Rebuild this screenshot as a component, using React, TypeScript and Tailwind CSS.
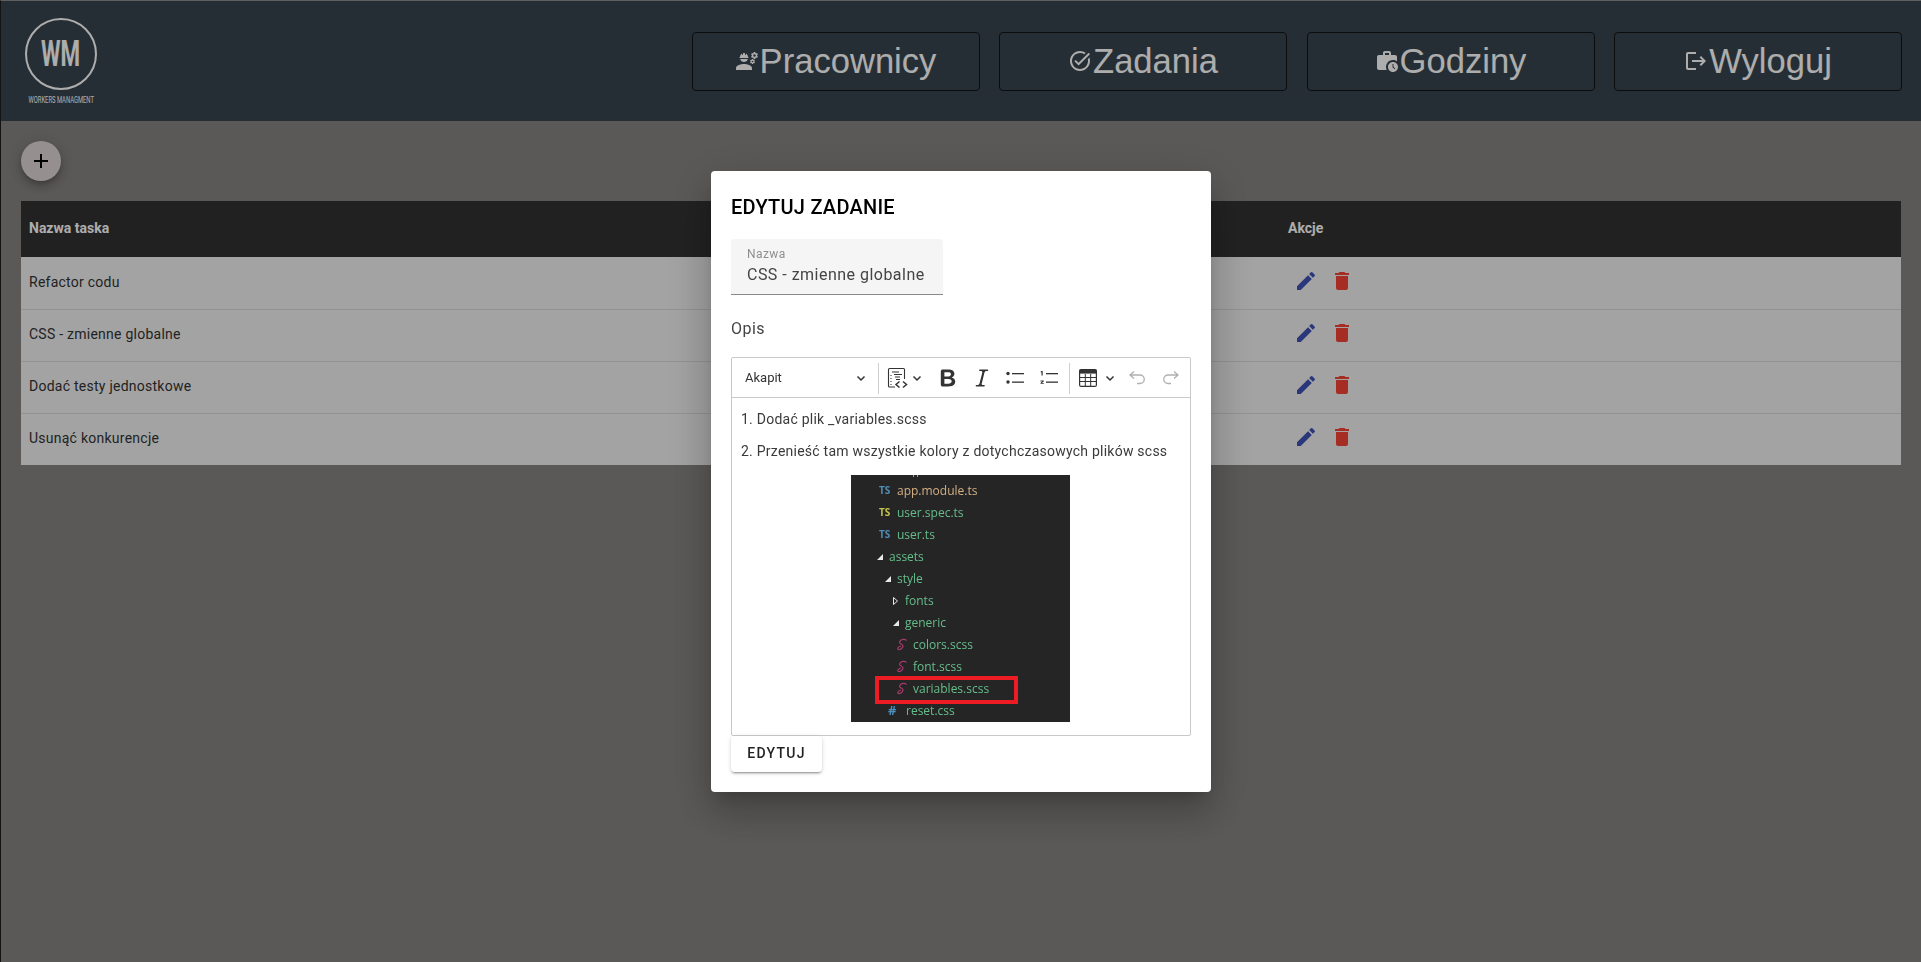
import { MdAdd, MdDelete, MdEdit, MdEngineering, MdLogout, MdTaskAlt, MdWorkHistory } from "react-icons/md";
import type { ReactNode } from "react";

const navItems = [
  { label: "Pracownicy", icon: <MdEngineering size={24} /> },
  { label: "Zadania", icon: <MdTaskAlt size={24} /> },
  { label: "Godziny", icon: <MdWorkHistory size={24} /> },
  { label: "Wyloguj", icon: <MdLogout size={24} /> },
];

const tasks = ["Refactor codu", "CSS - zmienne globalne", "Dodać testy jednostkowe", "Usunąć konkurencje"];

function Chevron() {
  return (
    <svg width="10" height="10" viewBox="0 0 10 10" fill="none" stroke="#333" strokeWidth="1.5" className="shrink-0">
      <path d="M1.5 3.5 5 7l3.5-3.5" />
    </svg>
  );
}

function ToolIcon({ children, className }: { children: ReactNode; className: string }) {
  return <div className={`flex items-center justify-center h-full shrink-0 ${className}`}>{children}</div>;
}

function SassIcon() {
  return (
    <svg width="12" height="14" viewBox="0 0 12 14" fill="none" stroke="#a63a6c" strokeWidth="1.2">
      <path d="M10.500 2.500C9 .5 4.500 1 3.500 4c-.6 2 3.500 2 3.500 4 0 2-3 4-4.500 3.500-1.500-.5-.5-3 2.500-3.500" />
    </svg>
  );
}

function Arrow({ open }: { open?: boolean }) {
  return open ? (
    <svg width="6" height="6" viewBox="0 0 6 6" className="shrink-0">
      <path d="M6 0v6H0z" fill="#e8e8e8" />
    </svg>
  ) : (
    <svg width="5" height="8" viewBox="0 0 5 8" className="shrink-0">
      <path d="M.5.5 4.500 4 .5 7.500z" fill="#252526" stroke="#e8e8e8" />
    </svg>
  );
}

function TreeRow({ indent, iconBox, icon, label, color = "text-[#66bd8a]" }: { indent: string; iconBox: string; icon: ReactNode; label: string; color?: string }) {
  return (
    <div className={`flex items-center h-[22px] shrink-0 ${indent}`}>
      <div className={`flex justify-start shrink-0 ${iconBox}`}>{icon}</div>
      <span className={color}>{label}</span>
    </div>
  );
}

function FileTree() {
  const tsBlue = <span className="text-[10px] font-bold text-[#4e8fb5]">TS</span>;
  const tsYellow = <span className="text-[10px] font-bold text-[#c4c44a]">TS</span>;
  return (
    <div className="relative ml-[110px] mt-[13px] w-[219px] h-[247px] overflow-hidden bg-[#252526] flex flex-col font-['Open_Sans',sans-serif] text-[12px] tracking-normal">
      <div className="pt-[5px]">
        <TreeRow indent="pl-[28px]" iconBox="w-[18px]" icon={tsBlue} label="app.module.ts" color="text-[#d4b083]" />
        <TreeRow indent="pl-[28px]" iconBox="w-[18px]" icon={tsYellow} label="user.spec.ts" />
        <TreeRow indent="pl-[28px]" iconBox="w-[18px]" icon={tsBlue} label="user.ts" />
        <TreeRow indent="pl-[26px]" iconBox="w-[12px]" icon={<Arrow open />} label="assets" />
        <TreeRow indent="pl-[34px]" iconBox="w-[12px]" icon={<Arrow open />} label="style" />
        <TreeRow indent="pl-[42px]" iconBox="w-[12px]" icon={<Arrow />} label="fonts" />
        <TreeRow indent="pl-[42px]" iconBox="w-[12px]" icon={<Arrow open />} label="generic" />
        <TreeRow indent="pl-[45px]" iconBox="w-[17px]" icon={<SassIcon />} label="colors.scss" />
        <TreeRow indent="pl-[45px]" iconBox="w-[17px]" icon={<SassIcon />} label="font.scss" />
        <TreeRow indent="pl-[45px]" iconBox="w-[17px]" icon={<SassIcon />} label="variables.scss" />
        <TreeRow indent="pl-[37px]" iconBox="w-[18px]" icon={<span className="text-[13px] font-bold text-[#4a90bf]">#</span>} label="reset.css" />
      </div>
      {/* tail of the row cut off at the top of the picture */}
      <div className="absolute left-[62px] top-0 flex gap-[3px]">
        <span className="w-[1px] h-[2px] bg-[#66bd8a]" />
        <span className="w-[1px] h-[2px] bg-[#66bd8a]" />
      </div>
      <div className="absolute left-[24px] top-[201px] w-[143px] h-[28px] border-4 border-[#ed1c24]" />
    </div>
  );
}

function Toolbar() {
  return (
    <div className="flex items-center h-[40px] pt-[2px] border-b border-[#c9c9c9] text-[#333]">
      <div className="flex items-center justify-between w-[146px] pl-[13px] pr-[12px] text-[13px] shrink-0">
        <span>Akapit</span>
        <Chevron />
      </div>
      <div className="w-px h-[31px] bg-[#cfcfcf] shrink-0" />
      <ToolIcon className="w-[30px] pl-[8px]">
        <svg width="22" height="22" viewBox="0 0 22 22" fill="none" stroke="#333" strokeWidth="1.1">
          <path d="M8 20H2.500a1 1 0 0 1-1-1V2.500a1 1 0 0 1 1-1h14a1 1 0 0 1 1 1V12" />
          <path d="M5 5h7M7 7.500h8M8 10h5M9 12.500h4M4 8v1M4 11v1M4 14v1M4 17v1" />
          <path strokeWidth="1.500" d="m12.500 14.500-3.500 3 3.500 3M16 14.500l3.500 3-3.500 3" />
        </svg>
      </ToolIcon>
      <ToolIcon className="w-[16px]"><Chevron /></ToolIcon>
      <ToolIcon className="w-[46px]">
        <svg width="24" height="24" viewBox="0 0 20 20" fill="#333">
          <path d="M10.187 17H5.773c-.637 0-1.092-.138-1.364-.415-.273-.277-.409-.718-.409-1.323V4.738c0-.617.14-1.062.419-1.332.279-.27.73-.406 1.354-.406h4.68c.69 0 1.288.041 1.793.124.506.083.96.242 1.36.478.341.197.644.447.906.75a3.262 3.262 0 0 1 .808 2.162c0 1.401-.722 2.426-2.167 3.075C15.050 10.175 16 11.315 16 13.010a3.756 3.756 0 0 1-2.296 3.504 6.100 6.100 0 0 1-1.517.377c-.571.073-1.238.11-2 .11zm-.217-6.217H7v4.087h3.069c1.977 0 2.965-.69 2.965-2.072 0-.707-.256-1.220-.768-1.537-.512-.319-1.277-.478-2.296-.478zM7 5.130v3.619h2.606c.729 0 1.292-.067 1.690-.2a1.600 1.600 0 0 0 .91-.765c.165-.267.247-.566.247-.897 0-.707-.26-1.176-.778-1.409-.519-.232-1.310-.348-2.375-.348H7z" />
        </svg>
      </ToolIcon>
      <ToolIcon className="w-[22px]">
        <svg width="24" height="24" viewBox="0 0 20 20" fill="#333" className="shrink-0">
          <path d="m9.586 14.633.021.004c-.036.335.095.655.393.962.082.083.173.15.274.201h1.474a.6.6 0 1 1 0 1.200H5.304a.6.6 0 0 1 0-1.200h1.150c.474-.07.809-.182 1.005-.334.157-.122.291-.32.404-.597l2.416-9.550a1.053 1.053 0 0 0-.281-.823 1.120 1.120 0 0 0-.442-.296H8.150a.6.6 0 0 1 0-1.200h6.443a.6.6 0 1 1 0 1.200h-1.195c-.376.056-.65.155-.824.296-.215.175-.39.491-.524.95l-2.230 9.079-.034.108z" />
        </svg>
      </ToolIcon>
      <ToolIcon className="w-[44px]">
        <svg width="20" height="20" viewBox="0 0 20 20" fill="#333">
          <circle cx="3" cy="5.500" r="1.700" />
          <circle cx="3" cy="14" r="1.700" />
          <rect x="7" y="5" width="12" height="1.300" />
          <rect x="7" y="13.500" width="12" height="1.300" />
        </svg>
      </ToolIcon>
      <ToolIcon className="w-[24px]">
        <svg width="20" height="20" viewBox="0 0 20 20" fill="#333" className="shrink-0">
          <rect x="7" y="5" width="12" height="1.300" />
          <rect x="7" y="13.500" width="12" height="1.300" />
          <path d="M2.500 3h1.200v4.500H2.500V4.200l-.8.2v-.8zM1.500 12.500h3.200v.9L3 14.900h1.800v.9H1.500v-.9l1.800-1.500H1.500z" />
        </svg>
      </ToolIcon>
      <div className="w-[8px] shrink-0" />
      <div className="w-px h-[31px] bg-[#cfcfcf] shrink-0" />
      <ToolIcon className="w-[36px]">
        <svg width="18" height="18" viewBox="0 0 18 18" fill="none">
          <rect x=".6" y=".6" width="16.800" height="16.800" rx="1.500" fill="#fff" stroke="#333" strokeWidth="1.200" />
          <rect x=".6" y=".6" width="16.800" height="4" fill="#333" />
          <path stroke="#333" strokeWidth="1" d="M1 8.500h16M1 12.500h16M6.300 5v12M11.700 5v12" />
        </svg>
      </ToolIcon>
      <ToolIcon className="w-[8px]"><Chevron /></ToolIcon>
      <ToolIcon className="w-[46px]">
        <svg width="18" height="18" viewBox="0 0 18 18" fill="none" stroke="#b0b0b0" strokeWidth="1.300">
          <path d="M6 2.500 2 6l4 3.500M2 6h10a4 4 0 0 1 0 8.500H9" />
        </svg>
      </ToolIcon>
      <ToolIcon className="w-[22px]">
        <svg width="18" height="18" viewBox="0 0 18 18" fill="none" stroke="#b0b0b0" strokeWidth="1.300" className="shrink-0">
          <path d="m12 2.500 4 3.500-4 3.500M16 6H6a4 4 0 0 0 0 8.500h3" />
        </svg>
      </ToolIcon>
    </div>
  );
}

export default function App() {
  return (
    <div className="min-h-screen bg-[#868482] border-l border-t border-t-[#8c8c8c] border-l-[#1c1c1c] text-[#000] font-['Roboto',sans-serif]">
      <header className="flex items-center justify-between h-[120px] bg-[#39454f] pl-[24px] pr-[19px]">
        <div className="flex flex-col items-center w-[72px] mt-[3px]">
          <div className="flex items-center justify-center w-[72px] h-[72px] rounded-full border-2 border-white">
            <span className="scale-x-[.62] text-[36px] font-bold text-white">WM</span>
          </div>
          <span className="mt-[4px] whitespace-nowrap scale-x-[.65] text-[9px] text-white">WORKERS MANAGMENT</span>
        </div>
        <nav className="flex gap-[19.500px]">
          {navItems.map((item) => (
            <button
              key={item.label}
              className="flex items-center justify-center w-[288px] h-[59px] rounded-[4px] border border-[#131313] text-white font-['Liberation_Sans',sans-serif] text-[34.600px]"
            >
              {item.icon}
              <span className="pt-[2px] ml-[1px]">{item.label}</span>
            </button>
          ))}
        </nav>
      </header>

      <main className="px-[20px] pt-[20px]">
        <button className="flex items-center justify-center w-[40px] h-[40px] rounded-full bg-[#dcd3d3] shadow-[0_3px_5px_-1px_rgba(0,0,0,.2),0_6px_10px_0_rgba(0,0,0,.14),0_1px_18px_0_rgba(0,0,0,.12)]">
          <MdAdd size={24} color="#000" />
        </button>

        <div className="mt-[20px] text-[14px]">
          <div className="grid grid-cols-[1259px_1fr] h-[56px] pb-[1px] items-center bg-[#323232] font-bold text-white">
            <div className="px-[8px]">Nazwa taska</div>
            <div className="px-[8px]">Akcje</div>
          </div>
          {tasks.map((task, i) => (
            <div
              key={task}
              className={`grid grid-cols-[1259px_1fr] h-[52px] items-center bg-[#f0f0f0] text-[#333] ${i > 0 ? "border-t border-[#d8d8d8]" : ""}`}
            >
              <div className="px-[8px] pb-[2px] tracking-[.25px]">{task}</div>
              <div className="flex px-[8px] pb-[5px]">
                <span className="flex items-center justify-center w-[36px] h-[24px] text-[#3f51b5]"><MdEdit size={24} /></span>
                <span className="flex items-center justify-center w-[36px] h-[24px] text-[#f44336]"><MdDelete size={24} /></span>
              </div>
            </div>
          ))}
        </div>
      </main>

      {/* Edit task dialog */}
      <div className="fixed inset-0 flex items-center justify-center bg-black/32">
        <div className="w-[500px] h-[621px] rounded-[4px] bg-white pl-[20.500px] pr-[20px] pt-[20px] shadow-[0_11px_15px_-7px_rgba(0,0,0,.2),0_24px_38px_3px_rgba(0,0,0,.14),0_9px_46px_8px_rgba(0,0,0,.12)]">
          <h2 className="text-[20px] leading-[32px] font-medium tracking-[.25px]">EDYTUJ ZADANIE</h2>
          <div className="mt-[16px] w-[212px] h-[56px] rounded-t-[4px] bg-[#f5f5f5] border-b border-[#8a8a8a] px-[16px] pt-[8px]">
            <div className="text-[12px] leading-[14px] tracking-[.4px] text-[#8f8f8f]">Nazwa</div>
            <div className="mt-[3px] text-[16px] leading-[22px] tracking-[.48px] text-[#444] whitespace-nowrap">CSS - zmienne globalne</div>
          </div>
          <div className="mt-[23px] text-[16px] leading-[22px] tracking-[.48px] text-[#444]">Opis</div>
          <div className="mt-[17px] w-[460px] h-[379px] rounded-[2px] border border-[#c9c9c9]">
            <Toolbar />
            <div className="px-[9px] pt-[10px] text-[14px] tracking-[.24px] text-[#3a3a3a]">
              <p className="leading-[22px] mb-[10px]">1. Dodać plik _variables.scss</p>
              <p className="leading-[22px]">2. Przenieść tam wszystkie kolory z dotychczasowych plików scss</p>
              <FileTree />
            </div>
          </div>
          <button className="block w-[91px] h-[36px] rounded-[4px] bg-white text-[14px] font-medium tracking-[1.250px] text-[#222] shadow-[0_3px_1px_-2px_rgba(0,0,0,.2),0_2px_2px_0_rgba(0,0,0,.14),0_1px_5px_0_rgba(0,0,0,.12)]">
            EDYTUJ
          </button>
        </div>
      </div>
    </div>
  );
}
